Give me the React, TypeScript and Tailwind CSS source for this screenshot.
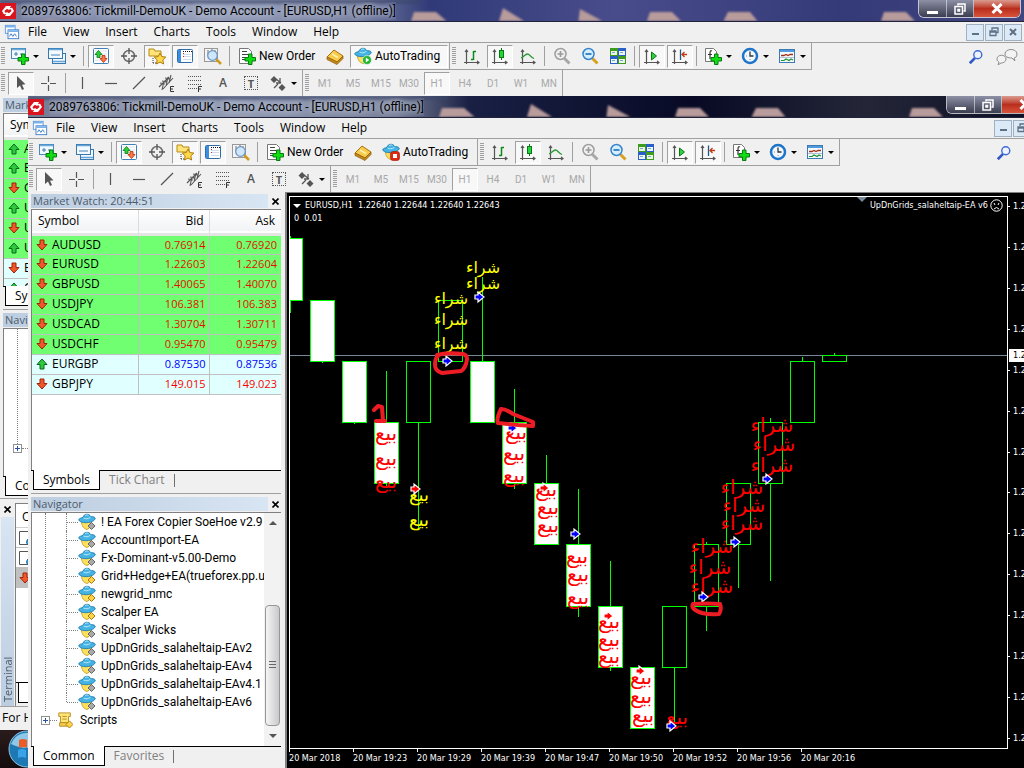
import type { ReactNode } from "react";
import { clsx } from "clsx";

type Direction = "up" | "down";

interface Quote {
  symbol: string;
  bid: string;
  ask: string;
  dir: Direction;
  flat?: boolean;
  blue?: boolean;
}

interface Candle {
  top: number;
  bottom: number;
  high?: number;
  low?: number;
  bear?: boolean;
}

const quotes: Quote[] = [
  { symbol: "AUDUSD", bid: "0.76914", ask: "0.76920", dir: "down" },
  { symbol: "EURUSD", bid: "1.22603", ask: "1.22604", dir: "down" },
  { symbol: "GBPUSD", bid: "1.40065", ask: "1.40070", dir: "down" },
  { symbol: "USDJPY", bid: "106.381", ask: "106.383", dir: "down" },
  { symbol: "USDCAD", bid: "1.30704", ask: "1.30711", dir: "down" },
  { symbol: "USDCHF", bid: "0.95470", ask: "0.95479", dir: "down" },
  { symbol: "EURGBP", bid: "0.87530", ask: "0.87536", dir: "up", flat: true, blue: true },
  { symbol: "GBPJPY", bid: "149.015", ask: "149.023", dir: "down", flat: true },
];

const backDirs: Direction[] = ["up", "up", "down", "up", "down", "up", "down", "up"];
const backQuotes: Quote[] = quotes.map((q, i) => ({ ...q, dir: backDirs[i] }));

const experts = [
  { name: "! EA Forex Copier SoeHoe v2.9" },
  { name: "AccountImport-EA" },
  { name: "Fx-Dominant-v5.00-Demo" },
  { name: "Grid+Hedge+EA(trueforex.pp.ua)", source: true },
  { name: "newgrid_nmc", source: true },
  { name: "Scalper EA", source: true },
  { name: "Scalper Wicks" },
  { name: "UpDnGrids_salaheltaip-EAv2" },
  { name: "UpDnGrids_salaheltaip-EAv4" },
  { name: "UpDnGrids_salaheltaip-EAv4.1" },
  { name: "UpDnGrids_salaheltaip-EAv6" },
];

const menus = ["File", "View", "Insert", "Charts", "Tools", "Window", "Help"];
const periods = ["M1", "M5", "M15", "M30", "H1", "H4", "D1", "W1", "MN"];
const times = ["2018", "19:23", "19:29", "19:39", "19:47", "19:50", "19:52", "19:56", "20:16"];

// one candle every 32px, y measured from the top of the plot
const candles: Candle[] = [
  { top: 41, bottom: 103, high: 39, low: 116, bear: true },
  { top: 103, bottom: 164, low: 166, bear: true },
  { top: 164, bottom: 225, low: 227, bear: true },
  { top: 225, bottom: 286, high: 174, low: 290, bear: true },
  { top: 164, bottom: 225, low: 332 },
  { top: 103, bottom: 164 },
  { top: 164, bottom: 225, high: 80, bear: true },
  { top: 225, bottom: 286, high: 192, low: 292, bear: true },
  { top: 286, bottom: 347, high: 258, bear: true },
  { top: 347, bottom: 409, high: 292, low: 420, bear: true },
  { top: 409, bottom: 470, high: 364, low: 474, bear: true },
  { top: 470, bottom: 531, bear: true },
  { top: 409, bottom: 470, low: 531 },
  { top: 347, bottom: 409, high: 345, low: 434 },
  { top: 286, bottom: 347, low: 391 },
  { top: 225, bottom: 286, high: 221, low: 384 },
  { top: 164, bottom: 225, high: 160 },
  { top: 158, bottom: 164, high: 156 },
];

const yellowBuys = [[161, 107], [161, 128], [161, 152], [193, 76], [193, 92]];
const yellowSells = [[129, 304], [129, 329]];
const redSells = [
  [96, 243], [96, 268], [96, 291],
  [226, 242], [224, 263], [224, 285],
  [256, 299], [258, 317], [258, 335],
  [287, 366], [288, 384], [288, 407],
  [319, 431], [319, 449], [319, 466],
  [351, 487], [351, 506], [353, 525],
  [387, 527],
];
const redBuys = [
  [422, 356], [420, 377], [422, 396],
  [452, 297], [454, 315], [452, 333],
  [482, 235], [484, 254], [482, 275],
];
const blueArrows = [[189, 100], [157, 164], [285, 337], [477, 282], [445, 345], [413, 400], [381, 529], [222, 231]];
const redArrows = [[125, 292], [254, 291], [318, 419], [350, 474]];

function Svg({ children, size = 18 }: { children: ReactNode; size?: number }) {
  return (
    <svg width={size} height={size} viewBox="0 0 18 18" fill="none" className="shrink-0" aria-hidden="true">
      {children}
    </svg>
  );
}

const Plus = () => (
  <path d="M10.500 7h3.500v3.500h3.500V14H14v3.500h-3.500V14H7v-3.500h3.500z" fill="#12dc12" stroke="#087a12" />
);

const NewChartIcon = () => (
  <Svg>
    <rect x="0.500" y="1.500" width="14" height="10" fill="#f2f9ff" stroke="#4a8abc" />
    <path d="M1 2.500h13" stroke="#6aaade" strokeWidth="1.500" />
    <path d="M3 7h4M5 5v4M9 7h3" stroke="#467aa8" />
    <Plus />
  </Svg>
);

const ProfilesIcon = () => (
  <Svg>
    <rect x="4.500" y="6.500" width="13" height="10" fill="#f2f9ff" stroke="#3878ac" />
    <rect x="0.500" y="1.500" width="14" height="10" fill="#f2f9ff" stroke="#3878ac" />
    <path d="M1 2.500h13M5 14.500h12" stroke="#64a6da" strokeWidth="1.500" />
    <path d="M3 8h9" stroke="#4982b4" />
  </Svg>
);

const MarketIcon = () => (
  <Svg>
    <rect x="1.500" y="1.500" width="15" height="15" rx="1" fill="#fff" stroke="#3f7fb5" />
    <path d="M3 4h12M3 7h12M3 10h12M3 13h12" stroke="#d9e3ee" />
    <path d="M6.500 3.500l3.500 4H8v3H5v-3H3z" fill="#2ed03a" stroke="#087a12" strokeWidth="0.800" />
    <path d="M11.500 15.500l-3.500-4h2v-3h3v3h2z" fill="#ff7848" stroke="#b82c08" strokeWidth="0.800" />
  </Svg>
);

const TargetIcon = () => (
  <Svg>
    <circle cx="9" cy="9" r="5.500" stroke="#6d6d6d" strokeWidth="1.500" />
    <path d="M9 1v6M9 11v6M1 9h6M11 9h6" stroke="#555" strokeWidth="1.300" />
  </Svg>
);

const FolderStarIcon = () => (
  <Svg>
    <path d="M1 9V2h5l1 2h6v5z" fill="#ffe47a" stroke="#b88a10" />
    <path d="M5 11v6M5 16h5" stroke="#333" strokeDasharray="1 1" />
    <path d="M12 6l1.800 3.600 4 .5-3 2.800.8 4.100-3.600-2-3.600 2 .8-4.100-3-2.800 4-.5z" fill="#ffd94a" stroke="#b07a08" />
  </Svg>
);

const NavigatorIcon = () => (
  <Svg>
    <rect x="1.500" y="2.500" width="15" height="13" rx="1" fill="#fff" stroke="#2f6ca5" />
    <path d="M3.500 3v12" stroke="#3b8ee0" strokeWidth="3" />
    <path d="M7 4.500h9" stroke="#111" strokeDasharray="1 1" />
    <path d="M7 7.500h8M7 9.500h8M7 12.500h8" stroke="#cfdcea" />
    <path d="M7 6.500h1M7 9.500h1" stroke="#d22" />
  </Svg>
);

const TesterIcon = () => (
  <Svg>
    <rect x="0.500" y="1.500" width="13" height="13" fill="#f4f4f4" stroke="#999" />
    <path d="M4 3v5M8 2v5M11 3v6" stroke="#777" />
    <path d="M12 12l5 5" stroke="#d19a1c" strokeWidth="2.500" />
    <circle cx="8.500" cy="8.500" r="4.800" fill="#cfe6fb" stroke="#6b97c4" strokeWidth="1.300" />
  </Svg>
);

const NewOrderIcon = () => (
  <Svg>
    <path d="M1.500 1.500h9l3 3v12h-12z" fill="#fff" stroke="#777" />
    <path d="M4 4.500h5M4 7.500h7M4 10.500h4M4 12.500h3" stroke="#444" />
    <Plus />
  </Svg>
);

const GoldIcon = () => (
  <Svg>
    <path d="M8 3l9 6-6 6-10-5z" fill="#f7cb4c" stroke="#a8700a" />
    <path d="M1 10l10 5 6-6v2.500L11 17.500 1 12.500z" fill="#c98a17" stroke="#8a5a08" strokeWidth="0.700" />
    <path d="M6 7l6 3.500" stroke="#fff0a8" strokeWidth="1.500" />
  </Svg>
);

const Expert = () => (
  <>
    <path d="M3.500 8c0 5 2 7.500 5.500 8.500 3-1 4.500-4 4.500-8.500z" fill="#ffe05c" stroke="#b9931c" strokeWidth="0.800" />
    <path d="M0.800 6.500c.5-1.500 3-1.500 4.200-2C5.500 0.500 11.500 0.300 12.500 3.500c1.500.2 4 .2 4.700 1.500.2 2.500-4 4.500-8.700 4.700-4 0-7.700-1-7.700-3.200z" fill="#45b4e4" stroke="#1c7cab" strokeWidth="0.900" />
    <path d="M5.500 5c2 1.300 5 1 7-.8M7 2.700c1-.8 2.500-.9 3.500-.4" stroke="#b5e8fb" />
  </>
);

const AutoTradingIcon = ({ running }: { running: boolean }) => (
  <Svg>
    <Expert />
    {running ? (
      <>
        <circle cx="13" cy="13" r="4.500" fill="#22b531" stroke="#fff" strokeWidth="0.600" />
        <path d="M11.800 10.500l3.500 2.500-3.500 2.500z" fill="#fff" />
      </>
    ) : (
      <>
        <rect x="8.500" y="8.500" width="9" height="9" rx="2.500" fill="#e02a10" stroke="#9e1604" strokeWidth="0.600" />
        <rect x="11" y="11" width="4" height="4" fill="#fff" />
      </>
    )}
  </Svg>
);

const ExpertIcon = ({ source }: { source?: boolean }) => (
  <Svg>
    <Expert />
    <path d="M13.500 9.500l3.500 3.500-3.500 3.500L10 13z" fill={source ? "#ffd24a" : "#a9a9a9"} stroke={source ? "#a87808" : "#666"} />
  </Svg>
);

const Axes = () => <path d="M3.500 3v14M1 15.500h15M2 5l1.500-2L5 5M14 14l2 1.500-2 1.500" stroke="#555" strokeWidth="1.200" />;

const BarChartIcon = () => (
  <Svg>
    <Axes />
    <path d="M10.500 4v9M8 12.500h2.500M10.500 4.500H13" stroke="#0b8a1c" strokeWidth="1.500" />
  </Svg>
);

const CandleIcon = () => (
  <Svg>
    <Axes />
    <path d="M10.500 1v12" stroke="#087a12" />
    <rect x="8.500" y="3.500" width="4" height="7" fill="#22d33a" stroke="#087a12" />
  </Svg>
);

const LineChartIcon = () => (
  <Svg>
    <Axes />
    <path d="M2 11c3-1 4-4 6.500-4 2 0 3 3 6.500 4.500" stroke="#2a9a34" strokeWidth="1.300" />
  </Svg>
);

const ZoomIcon = ({ plus }: { plus?: boolean }) => (
  <Svg>
    <path d="M11.500 11.500l5 5" stroke={plus ? "#a8a8a8" : "#d8a01e"} strokeWidth="3" />
    <circle cx="7.500" cy="7" r="5.500" fill={plus ? "#f0f0f0" : "#d4f0ff"} stroke={plus ? "#9d9d9d" : "#3783cc"} strokeWidth="1.500" />
    <path d={plus ? "M4.500 7h6M7.500 4v6" : "M4.500 7h6"} stroke={plus ? "#999" : "#1c6db5"} strokeWidth="1.600" />
  </Svg>
);

const TileIcon = () => (
  <Svg>
    <path d="M1 1h8v8H1zM9 9h8v8H9z" fill="#3e9c1c" />
    <path d="M9 1h8v8H9zM1 9h8v8H1z" fill="#2a5fc8" />
    <path d="M2 4h6v4H2zM10 4h6v4h-6zM2 12h6v4H2zM10 12h6v4h-6z" fill="#eef6ee" />
    <path d="M3 5.500h3M11 5.500h3M3 13.500h3M11 13.500h3" stroke="#7aa6c8" />
  </Svg>
);

const ScrollIcon = () => (
  <Svg>
    <Axes />
    <path d="M8.500 5v8l5-4z" fill="#30cf44" stroke="#087a12" />
  </Svg>
);

const ShiftIcon = () => (
  <Svg>
    <Axes />
    <path d="M9.500 2.500V13" stroke="#1c5a8a" strokeWidth="1.300" />
    <path d="M16 7.500h-5M13.500 5L11 7.500l2.500 2.500" stroke="#c43a10" strokeWidth="1.300" />
  </Svg>
);

const IndicatorsIcon = () => (
  <Svg>
    <path d="M1.500 1.500h8l3 3v10h-11z" fill="#fff" stroke="#777" />
    <path d="M8 4C6 3 6 5 6 7v5M4 7.500h4" stroke="#333" strokeWidth="1.200" />
    <Plus />
  </Svg>
);

const ClockIcon = () => (
  <Svg>
    <circle cx="9" cy="9" r="7" fill="#f2f8ff" stroke="#1d74c9" strokeWidth="2.500" />
    <path d="M9 4.500V9h3.500" stroke="#333" strokeWidth="1.300" />
    <path d="M5 9h1M9 13v-1" stroke="#888" />
  </Svg>
);

const TemplateIcon = () => (
  <Svg>
    <rect x="1.500" y="2.500" width="15" height="13" fill="#f5faff" stroke="#3c7ab2" />
    <path d="M2 4h14" stroke="#4f9ae0" strokeWidth="2" />
    <path d="M3 8.500h3l2-1 2 1 2-1h3" stroke="#a03018" strokeWidth="1.300" />
    <path d="M2 10.500h14" stroke="#9ab" strokeWidth="0.700" />
    <path d="M3 13.500h3l2-1.500 3 1.500 2-1.500 2 1" stroke="#1c9430" strokeWidth="1.200" />
  </Svg>
);

const CursorIcon = () => (
  <Svg>
    <path d="M5 2v12l3-2.500 2 4.500 2-1-2-4.300 3.500-.4z" fill="#555" />
  </Svg>
);

const CrosshairIcon = () => (
  <Svg>
    <path d="M8.500 2v6M8.500 11v6M1 9.500h6M10 9.500h6" stroke="#555" strokeWidth="1.200" />
  </Svg>
);

const LineIcon = ({ d }: { d: string }) => (
  <Svg>
    <path d={d} stroke="#555" strokeWidth="1.200" />
  </Svg>
);

const ChannelIcon = () => (
  <Svg>
    <path d="M1 13L11 3M5 15L15 4M2 9l5 1M4 7l5 1M7 4l5 1M4 16l2-9M8 12l2-9M11 9l2-8" stroke="#555" strokeWidth="1.100" />
    <path d="M16 12.500h-3.500v5H16M12.500 15H15" stroke="#333" />
  </Svg>
);

const FiboIcon = () => (
  <Svg>
    <path d="M2 2.500h14M2 6.500h14M2 10.500h14M2 14.500h9" stroke="#555" strokeDasharray="1 1" />
    <path d="M16 12.500h-3.500V18M12.500 15H15" stroke="#333" />
  </Svg>
);

const ShapesIcon = () => (
  <Svg>
    <path d="M5 2l3.500 3.500L5 9 1.500 5.500zM13 10l3.500 3.500L13 17l-3.500-3.500z" fill="#555" />
    <path d="M5 14l4-4M7 5l5 4M11 4v5h-4" stroke="#555" strokeWidth="1.300" />
  </Svg>
);

const LogoIcon = () => (
  <svg width="16" height="16" viewBox="0 0 16 16" className="shrink-0" aria-hidden="true">
    <rect width="16" height="16" fill="#d9141e" />
    <path d="M2 8l4-5h5l-1 1.800 2.500 1.200-4 .7-1.500-1L4.500 8l1 2.500-1.500 1z" fill="#fff" />
    <path d="M14 8l-4 5H5l1-1.800L3.500 10l4-.7 1.500 1L11.500 8l-1-2.500 1.500-1z" fill="#fff" />
  </svg>
);

const ChartMenuIcon = () => (
  <Svg size={16}>
    <rect x="1.500" y="1.500" width="11" height="9" fill="#fff" stroke="#5a96d8" />
    <rect x="4.500" y="6.500" width="12" height="10" fill="#fff" stroke="#3a7ccc" />
    <path d="M2 3h10M5 8h11" stroke="#79b1ea" strokeWidth="2" />
    <path d="M6 14l2-3 2 3 2-3 2 3" stroke="#2f72c2" />
  </Svg>
);

const SearchIcon = () => (
  <Svg size={16}>
    <path d="M8 10l-6 6" stroke="#3158c4" strokeWidth="3" />
    <circle cx="11" cy="6.500" r="4.500" fill="#eef4ff" stroke="#3f6ad4" strokeWidth="1.600" />
  </Svg>
);

const ChatIcon = () => (
  <svg width="22" height="16" viewBox="0 0 22 16" fill="#f3f3f3" stroke="#8d8d8d" aria-hidden="true">
    <path d="M9 5c0-6 12-6 12 0 0 3-2 4-3 4l1 3-3-3c-4 0-7-1-7-4z" />
    <path d="M1 10c0-5 9-5 9 0 0 3-3 4-5 4l-3 2 1-3c-1-1-2-1-2-3z" />
  </svg>
);

const DirectionIcon = ({ dir }: { dir: Direction }) => (
  <svg width="12" height="12" viewBox="0 0 12 12" className="shrink-0" aria-label={dir}>
    {dir === "up" ? (
      <path d="M6 1l5 5.500H8V11H4V6.500H1z" fill="#30c840" stroke="#08691a" />
    ) : (
      <path d="M6 11l5-5.500H8V1H4v4.500H1z" fill="#f0582c" stroke="#9e2208" />
    )}
  </svg>
);

const Caret = () => <span className="border-x-3 border-t-3 border-x-transparent border-t-black" />;

function Tool({ label, pressed, drop, children }: { label: string; pressed?: boolean; drop?: boolean; children: ReactNode }) {
  return (
    <button
      type="button"
      aria-label={label}
      className={clsx(
        "flex h-[23px] shrink-0 items-center border",
        drop ? "w-[35px] gap-1 pl-0.5" : "w-[26px] justify-center",
        pressed ? "border-t-[#a0a0a0] border-r-white border-b-white border-l-[#a0a0a0] bg-[#f8f8f8]" : "border-transparent"
      )}
    >
      {children}
      {drop && <Caret />}
    </button>
  );
}

const Grip = () => <span className="mr-px h-[18px] w-1 shrink-0 bg-[repeating-linear-gradient(#a0a0a0_0_1px,#f0f0f0_1px_2px)]" />;
const Separator = () => <span className="mx-px h-5 w-0.5 shrink-0 border-l border-[#a0a0a0]" />;

function TitleBar({ dark }: { dark?: boolean }) {
  const button = "flex items-center justify-center border-r border-white/50 text-white";
  return (
    <header
      className={clsx(
        "relative flex h-[22px] shrink-0 items-center overflow-hidden border-b border-[#20233a]",
        dark
          ? "bg-[linear-gradient(90deg,#747b94_0,#8f99b2_20%,#777f98_36%,#192044_43%,#080a25_65%,#242638_82%,#090b22)]"
          : "bg-[linear-gradient(90deg,#747b9c_0,#949db8_20%,#7880a0_35%,#303a78_42%,#494c8a_60%,#343a78_82%,#41467e)]"
      )}
    >
      <svg className="absolute inset-0 h-full w-full blur-[1px]" aria-hidden="true">
        <g fill="#b89b9b">
          <path d="M410 24l4-12h22l14 12zM498 24l5-16 26 16zM578 24l2-15 28 15zM646 24l4-12h22l12 12zM722 24l6-12h22l10 12zM880 24l4-12h22l12 12z" />
          <path d="M20 24l30-6 30 6zM196 24l20-5 20 5z" opacity="0.500" />
        </g>
        <path d="M0 0h420v4H0z" fill="#3b4468" opacity="0.600" />
      </svg>
      <div className="relative flex h-full min-w-0 flex-1 items-center gap-[5px]">
        <LogoIcon />
        <h1 className="truncate font-[Roboto] text-[12px] text-black [text-shadow:0_0_6px_#c8d0e0,0_0_8px_#c8d0e0]">
          2089763806: Tickmill-DemoUK - Demo Account - [EURUSD,H1 (offline)]
        </h1>
      </div>
      <div className="relative mr-[3px] flex h-[18px] self-start overflow-hidden rounded-b-md border border-t-0 border-white/70">
        <button type="button" aria-label="Minimize" className={clsx(button, "w-7 bg-linear-to-b from-[#8e91a5] to-[#3b3d50]")}>
          <span className="mt-2 h-[3px] w-[11px] bg-white" />
        </button>
        <button type="button" aria-label="Restore" className={clsx(button, "w-[27px] bg-linear-to-b from-[#8e91a5] to-[#3b3d50]")}>
          <svg width="12" height="12" viewBox="0 0 12 12" fill="none" stroke="#fff" strokeWidth="1.500">
            <path d="M4 2.500V1h7v7H9.500" />
            <path d="M1 3.500h7.500V11H1zM4 6.500h1.500v1.500H4z" />
          </svg>
        </button>
        <button type="button" aria-label="Close" className="flex w-[46px] items-center justify-center bg-linear-to-b from-[#d99a90] via-[#b92d1c] to-[#d8543a]">
          <svg width="12" height="11" viewBox="0 0 12 11" stroke="#fff" strokeWidth="3">
            <path d="M1.500 1l9 9M10.500 1l-9 9" />
          </svg>
        </button>
      </div>
    </header>
  );
}

function MenuBar() {
  const mdi = "flex h-[17px] w-[18px] items-center justify-center border border-[#9fb0c2] bg-[#dce9f7]";
  return (
    <nav className="flex h-[21px] shrink-0 items-center border-b border-[#a0a0a0] bg-[#f0f0f0] pr-0.5 pl-1">
      <ChartMenuIcon />
      <div className="ml-2 flex flex-1 gap-4 text-[12px]">
        {menus.map((m) => (
          <button key={m} type="button">{m}</button>
        ))}
      </div>
      <div className="flex gap-px">
        <button type="button" aria-label="Minimize chart" className={mdi}>
          <span className="mt-1 h-0.5 w-[7px] bg-[#5d7285]" />
        </button>
        <button type="button" aria-label="Restore chart" className={mdi}>
          <svg width="10" height="10" viewBox="0 0 10 10" fill="none" stroke="#5d7285" strokeWidth="1.300">
            <path d="M3 3V1h6v4.500H7M1 4h6v4.500H1zM1 5h6" />
          </svg>
        </button>
        <button type="button" aria-label="Close chart" className={mdi}>
          <svg width="8" height="8" viewBox="0 0 8 8" stroke="#5d7285" strokeWidth="2">
            <path d="M1 1l6 6M7 1L1 7" />
          </svg>
        </button>
      </div>
    </nav>
  );
}

function MainToolbar({ running }: { running: boolean }) {
  return (
    <div className="flex h-[27px] shrink-0 items-center justify-between pr-1.5">
      <div className="flex h-full shrink-0">
        <div className="flex h-full items-center gap-0.5 border-r border-b border-[#a0a0a0] pr-px pl-px">
          <Grip />
          <Tool label="New chart" drop><NewChartIcon /></Tool>
          <Tool label="Profiles" drop><ProfilesIcon /></Tool>
          <Separator />
          <Tool label="Market Watch" pressed><MarketIcon /></Tool>
          <Tool label="Data Window"><TargetIcon /></Tool>
          <Tool label="Navigator" pressed><FolderStarIcon /></Tool>
          <Tool label="Terminal" pressed><NavigatorIcon /></Tool>
          <Tool label="Strategy Tester"><TesterIcon /></Tool>
          <Separator />
          <button type="button" className="flex h-[23px] w-[86px] items-center gap-[3px] pl-1 font-[Roboto] text-[12px] whitespace-nowrap">
            <NewOrderIcon />
            New Order
          </button>
          <Tool label="MetaEditor"><GoldIcon /></Tool>
          <button
            type="button"
            aria-pressed={running}
            className={clsx(
              "flex h-[23px] w-[98px] items-center gap-[3px] border pl-[3px] font-[Roboto] text-[12px]",
              running ? "border-t-[#a0a0a0] border-r-white border-b-white border-l-[#a0a0a0] bg-[#f8f8f8]" : "border-transparent"
            )}
          >
            <AutoTradingIcon running={running} />
            AutoTrading
          </button>
        </div>
        <div className="flex h-full items-center gap-0.5 border-r border-b border-[#a0a0a0] pr-px pl-0.5">
          <Grip />
          <Tool label="Bar chart"><BarChartIcon /></Tool>
          <Tool label="Candlesticks" pressed><CandleIcon /></Tool>
          <Tool label="Line chart"><LineChartIcon /></Tool>
          <Separator />
          <Tool label="Zoom in"><ZoomIcon plus /></Tool>
          <Tool label="Zoom out"><ZoomIcon /></Tool>
          <Tool label="Tile windows"><TileIcon /></Tool>
          <Separator />
          <Tool label="Auto scroll" pressed><ScrollIcon /></Tool>
          <Tool label="Chart shift" pressed><ShiftIcon /></Tool>
          <Separator />
          <Tool label="Indicators" drop><IndicatorsIcon /></Tool>
          <Tool label="Periods" drop><ClockIcon /></Tool>
          <Tool label="Templates" drop><TemplateIcon /></Tool>
        </div>
      </div>
      <div className="flex shrink-0 items-center gap-3">
        <button type="button" aria-label="Search"><SearchIcon /></button>
        <button type="button" aria-label="Chat"><ChatIcon /></button>
      </div>
    </div>
  );
}

function DrawToolbar() {
  return (
    <div className="flex h-[26px] shrink-0">
      <div className="flex items-center gap-0.5 border-r border-[#a0a0a0] pr-px pl-px">
        <Grip />
        <Tool label="Cursor" pressed><CursorIcon /></Tool>
        <Tool label="Crosshair"><CrosshairIcon /></Tool>
        <Separator />
        <Tool label="Vertical line"><LineIcon d="M8.500 3v12" /></Tool>
        <Tool label="Horizontal line"><LineIcon d="M3 9.500h12" /></Tool>
        <Tool label="Trendline"><LineIcon d="M3 15L15 3" /></Tool>
        <Tool label="Channel"><ChannelIcon /></Tool>
        <Tool label="Fibonacci"><FiboIcon /></Tool>
        <Tool label="Text"><span className="text-[12px] font-semibold text-[#555]">A</span></Tool>
        <Tool label="Text label">
          <span className="flex size-[14px] items-center justify-center border border-dotted border-[#555] text-[11px] leading-none font-bold text-[#555]">T</span>
        </Tool>
        <Tool label="Arrows" drop><ShapesIcon /></Tool>
      </div>
      <div className="flex items-center gap-0.5 border-r border-[#a0a0a0] pl-0.5">
        <Grip />
        {periods.map((p) => (
          <Tool key={p} label={p} pressed={p === "H1"}>
            <span className="font-[Roboto] text-[10px] text-[#a8a8a8]">{p}</span>
          </Tool>
        ))}
      </div>
    </div>
  );
}

function PanelHeader({ children }: { children: ReactNode }) {
  return (
    <div className="flex h-[17px] shrink-0 items-center pt-px">
      <h2 className="h-[14px] flex-1 truncate bg-linear-to-r from-[#bccde0] to-[#d8e5f3] pl-0.5 text-[11px] leading-[13px] text-[#4c5a6b]">{children}</h2>
      <button type="button" aria-label="Close panel" className="flex w-[13px] justify-end pr-0.5">
        <svg width="7" height="7" viewBox="0 0 7 7" stroke="#000" strokeWidth="1.600"><path d="M.5.5l6 6M6.500.5l-6 6" /></svg>
      </button>
    </div>
  );
}

function Tabs({ active, other }: { active: string; other: string }) {
  return (
    <div className="flex h-[22px] shrink-0 items-start border-t border-black bg-[#f0f0f0] pl-0.5 text-[12px] leading-[18px]">
      <button type="button" className="-mt-px h-5 border-x border-b border-black bg-white px-[9px]">{active}</button>
      <button type="button" className="px-[9px] text-[#808080]">{other}</button>
      <span className="mt-[3px] h-[13px] w-px bg-[#707070]" />
    </div>
  );
}

function MarketWatch({ rows }: { rows: Quote[] }) {
  return (
    <>
      <PanelHeader>Market Watch: 20:44:51</PanelHeader>
      <div className="min-h-0 flex-1 overflow-hidden border-t border-l border-[#808080] bg-white">
        <table className="w-full table-fixed border-collapse text-[12px]">
          <thead>
            <tr className="h-6 border-b-3 border-[#e4e4e4] bg-linear-to-b from-white to-[#f2f3f5]">
              <th className="w-[106px] border-r border-[#dcdcdc] pl-1.5 text-left font-normal">Symbol</th>
              <th className="w-[71px] border-r border-[#dcdcdc] pr-[5px] text-right font-normal">Bid</th>
              <th className="pr-1.5 text-right font-normal">Ask</th>
            </tr>
          </thead>
          <tbody>
            {rows.map((q) => (
              <tr key={q.symbol} className={clsx("h-5 border-b border-[#c0c0c0] leading-[18px]", q.flat ? "bg-[#e0ffff]" : "bg-[#70ff70]")}>
                <td className="border-r border-[#c0c0c0] pl-1">
                  <span className="flex items-center gap-1"><DirectionIcon dir={q.dir} />{q.symbol}</span>
                </td>
                <td className={clsx("border-r border-[#c0c0c0] pr-[3px] text-right text-[11px]", q.blue ? "text-[#0000ff]" : q.flat ? "text-[#ff0000]" : "text-[#e01000]")}>{q.bid}</td>
                <td className={clsx("pr-1 text-right text-[11px]", q.blue ? "text-[#0000ff]" : q.flat ? "text-[#ff0000]" : "text-[#e01000]")}>{q.ask}</td>
              </tr>
            ))}
          </tbody>
        </table>
      </div>
      <Tabs active="Symbols" other="Tick Chart" />
    </>
  );
}

const Expander = () => (
  <button type="button" aria-label="Expand" className="flex size-[9px] shrink-0 items-center justify-center border border-[#919191] bg-white">
    <svg width="5" height="5" viewBox="0 0 5 5" stroke="#2b4fa0"><path d="M0 2.500h5M2.500 0v5" /></svg>
  </button>
);

function NavigatorTree() {
  return (
    <div className="flex min-h-0 flex-1 border-t border-l border-[#808080] bg-white">
      <div className="min-w-0 flex-1 overflow-hidden font-[Roboto] text-[12px] leading-[18px]">
        <ul className="ml-[13px] border-l border-dotted border-[#808080]">
          {experts.map((e, i) => (
            <li key={e.name} className="flex h-[18px] items-center pl-5">
              <span className={clsx("w-px self-start border-l border-dotted border-[#808080]", i === experts.length - 1 ? "h-[9px]" : "h-full")} />
              <span className="w-[11px] shrink-0 border-t border-dotted border-[#808080]" />
              <ExpertIcon source={e.source} />
              <span className="ml-[5px] whitespace-nowrap">{e.name}</span>
            </li>
          ))}
        </ul>
        <div className="ml-[9px] flex h-[18px] items-center">
          <Expander />
          <span className="w-[7px] border-t border-dotted border-[#808080]" />
          <Svg size={16}>
            <path d="M2 1h13v4h-2v7H4V5H2z" fill="#ffe578" stroke="#b18a1a" />
            <path d="M3 12h9v4H3z" fill="#f3cc50" stroke="#b18a1a" />
            <path d="M6 5h5M6 8h5" stroke="#b18a1a" />
            <path d="M14 10l4 4-4 4-4-4z" fill="#ffd24a" stroke="#a87808" />
          </Svg>
          <span className="ml-[7px]">Scripts</span>
        </div>
      </div>
      <div className="flex w-[17px] flex-col items-center bg-[#f2f2f2] py-2">
        <span className="mb-1 border-x-4 border-b-4 border-x-transparent border-b-[#555]" />
        <span className="flex-[77]" />
        <span className="flex w-[15px] flex-[121] items-center justify-center rounded-sm border border-[#979797] bg-linear-to-r from-[#f5f5f5] to-[#c9c9cd]">
          <span className="h-[8px] w-[7px] bg-[repeating-linear-gradient(#666_0_1px,transparent_1px_3px)]" />
        </span>
        <span className="mt-2 border-x-4 border-t-4 border-x-transparent border-t-[#555]" />
      </div>
    </div>
  );
}

function SideColumn({ back }: { back?: boolean }) {
  return (
    <aside className="flex w-[250px] shrink-0 flex-col">
      <section className={clsx("flex flex-col", back ? "h-[212px]" : "h-[300px]")}>
        <MarketWatch rows={back ? backQuotes : quotes} />
      </section>
      <div className="mt-px h-0.5 border-t border-[#a0a0a0]" />
      <section className="flex min-h-0 flex-1 flex-col">
        <PanelHeader>Navigator</PanelHeader>
        {back ? (
          <div className="min-h-0 flex-1 border-t border-l border-[#808080] bg-white">
            <div className="ml-[13px] h-[115px] border-l border-dotted border-[#808080]" />
            <div className="ml-[9px] flex items-center">
              <Expander />
              <span className="w-3 border-t border-dotted border-[#808080]" />
            </div>
          </div>
        ) : (
          <NavigatorTree />
        )}
        <Tabs active="Common" other="Favorites" />
      </section>
    </aside>
  );
}

function Marker({ x, y, color }: { x: number; y: number; color: string }) {
  return (
    <path
      d="M-4 -2h3v-3l6 5-6 5v-3h-3z"
      transform={`translate(${x} ${y})`}
      fill={color}
      stroke="#fff"
      strokeWidth="1.200"
    />
  );
}

function Labels({ at, text, className }: { at: number[][]; text: string; className: string }) {
  return at.map(([x, y]) => (
    <text key={`${x}-${y}`} x={x} y={y} textAnchor="middle" className={className}>{text}</text>
  ));
}

function Plot() {
  return (
    <svg className="absolute inset-0 h-full w-full" aria-label="EURUSD H1 candles">
      <line x1="0" x2="100%" y1="158.500" y2="158.500" stroke="#778899" />
      <g stroke="#00ff00">
        {candles.map((c, i) => (
          <g key={i}>
            <line x1={i * 32 + 0.5} x2={i * 32 + 0.5} y1={c.high ?? c.top} y2={c.top} />
            <line x1={i * 32 + 0.5} x2={i * 32 + 0.5} y1={c.bottom} y2={c.low ?? c.bottom} />
            <rect x={i * 32 - 11.5} y={c.top + 0.5} width="24" height={c.bottom - c.top} fill={c.bear ? "#fff" : "none"} />
          </g>
        ))}
      </g>
      <g fontFamily="'DejaVu Sans', sans-serif">
        <Labels at={yellowBuys} text="شراء" className="fill-[#ffff00] text-[16px]" />
        <Labels at={yellowSells} text="بيع" className="fill-[#ffff00] text-[18px]" />
        <Labels at={redSells} text="بيع" className="fill-[#ff0000] text-[20px]" />
        <Labels at={redBuys} text="شراء" className="fill-[#ff0000] text-[20px]" />
      </g>
      {blueArrows.map(([x, y]) => <Marker key={`${x}-${y}`} x={x} y={y} color="#0000ff" />)}
      {redArrows.map(([x, y]) => <Marker key={`${x}-${y}`} x={x} y={y} color="#ff0000" />)}
      <g fill="none" stroke="#ed1c24" strokeWidth="4" strokeLinecap="round" strokeLinejoin="round">
        <path d="M84 213l4-4 4 1 1 14M86 224h9" />
        <path d="M147 158q10-3 26-1 4 1 4 5-1 9-6 12l-19 2q-7-2-7-8 0-7 3-9" />
        <path d="M211 212q5 0 12 5l20 8v4l-15-1-20-2q-2-4 3-14" />
        <path d="M403 407q14-1 27 0 2 5-1 10-9 1-17-1-12-4-9-9" />
      </g>
    </svg>
  );
}

function Chart() {
  return (
    <main className="flex min-w-0 flex-1 flex-col border-t border-l-2 border-[#808080] bg-black pt-[3px] pl-0.5 font-['DejaVu_Sans_Condensed',sans-serif] text-[9px] leading-[13px] text-white">
      <div className="flex min-h-0 flex-1">
        <section className="relative min-w-0 flex-1 overflow-hidden border border-white">
          <Plot />
          <div className="relative flex justify-between pt-0.5 pr-1 pl-[3px]">
            <div>
              <div className="flex items-center gap-1 whitespace-pre">
                <span className="border-x-4 border-t-4 border-x-transparent border-t-white" />
                EURUSD,H1  1.22640 1.22644 1.22640 1.22643
              </div>
              <div className="whitespace-pre pl-px">0  0.01</div>
            </div>
            <div className="flex items-start gap-0.5">
              <span className="-mt-0.5 mr-px border-x-5 border-t-5 border-x-transparent border-t-[#778899]" />
              <span>UpDnGrids_salaheltaip-EA v6</span>
              <svg width="13" height="13" viewBox="0 0 13 13" fill="none" stroke="#fff" aria-label="Trading disabled">
                <circle cx="6.500" cy="6.500" r="5.700" />
                <path d="M4 10q2.500-3 5 0M4 4l1 2M9 4L8 6" />
              </svg>
            </div>
          </div>
        </section>
        <div className="relative w-[44px] shrink-0">
          <ul className="flex h-full flex-col justify-between pt-1 pb-1">
            {Array.from({ length: 14 }, (_, i) => (
              <li key={i} className="flex items-center gap-[3px]">
                <span className="h-px w-0.5 bg-white" />
                1.22{690 - i * 10}
              </li>
            ))}
          </ul>
          <span className="absolute top-[153px] left-px w-full bg-white pl-1 text-black">1.22643</span>
        </div>
      </div>
      <div className="flex h-[19px]">
        {times.map((t) => (
          <div key={t} className="w-16 shrink-0 whitespace-nowrap">
            <span className="block h-[3px] w-px bg-white" />
            20 Mar {t}
          </div>
        ))}
      </div>
    </main>
  );
}

function TerminalPanel() {
  return (
    <section className="flex h-[208px] shrink-0 border-t border-[#a0a0a0] pt-1 text-[12px]">
      <div className="flex w-[15px] flex-col items-center">
        <button type="button" aria-label="Close terminal" className="flex h-3 items-center">
          <svg width="7" height="7" viewBox="0 0 7 7" stroke="#000" strokeWidth="1.600"><path d="M.5.5l6 6M6.500.5l-6 6" /></svg>
        </button>
        <h2 className="mt-0.5 flex-1 rotate-180 bg-linear-to-t from-[#d8e5f3] to-[#bccde0] pt-1 text-[11px] leading-[13px] text-[#4c5a6b] [writing-mode:vertical-rl]">Terminal</h2>
      </div>
      <div className="flex flex-1 flex-col border-t border-l border-[#808080] bg-white">
        <div className="h-6 border-b border-[#d0d0d0] pt-1 pl-1.5">Order</div>
        {[0, 1].map((i) => (
          <div key={i} className="flex h-5 items-center border-b border-[#c0c0c0] pl-[3px]">
            <svg width="14" height="14" viewBox="0 0 14 14" fill="#fff" stroke="#555" aria-hidden="true">
              <path d="M.5.5h12v13H.5z" />
              <path d="M9 8a4 4 0 0 0 0 6h5V8z" fill="#3a9ad0" stroke="#1c6c9c" />
            </svg>
          </div>
        ))}
        <div className="flex h-5 items-center bg-[#c0c0c0] pl-[3px]"><DirectionIcon dir="down" /></div>
        <div className="flex-1" />
        <div className="h-6 border-t border-black bg-[#f0f0f0] pl-0.5"><div className="h-5 w-14 border-b border-l border-black bg-white" /></div>
      </div>
    </section>
  );
}

function Terminal({ back }: { back?: boolean }) {
  return (
    <div className="flex h-full flex-col bg-[#f0f0f0] text-black">
      <TitleBar dark={!back} />
      <MenuBar />
      <MainToolbar running={!!back} />
      <DrawToolbar />
      <div className="flex min-h-0 flex-1 pl-[3px]">
        <SideColumn back={back} />
        {back ? <div className="flex-1 bg-black" /> : (
          <>
            <div className="w-1 shrink-0" />
            <Chart />
          </>
        )}
      </div>
      {back && (
        <>
          <TerminalPanel />
          <footer className="h-6 shrink-0 border-t border-[#a0a0a0] pt-0.5 pl-0.5 text-[12px]">For Help, press F1</footer>
        </>
      )}
    </div>
  );
}

function Taskbar() {
  return (
    <div className="h-[38px] shrink-0 bg-linear-to-b from-[#2a1c1c] to-[#140c0e] pl-2">
      <button type="button" aria-label="Start" className="block">
        <svg width="38" height="38" viewBox="0 0 38 38" aria-hidden="true">
          <circle cx="19" cy="19" r="18" fill="#1e78b4" stroke="#8cc4e4" />
          <path d="M3 14a17 17 0 0 1 32 0q-16 8-32 0" fill="#8fc8e6" />
          <path d="M11 10q4-2 8 0v8q-4-2-8 0z" fill="#ee5a24" />
          <path d="M20 10q4 2 8 0v8q-4 2-8 0z" fill="#86c232" />
          <path d="M10 20q4-2 8 0v8q-4-2-8 0z" fill="#39a3e8" />
          <path d="M20 20q4 2 8 0v8q-4 2-8 0z" fill="#fbc92e" />
        </svg>
      </button>
    </div>
  );
}

export default function App() {
  return (
    <div className="relative flex h-screen flex-col overflow-hidden font-['Open_Sans','DejaVu_Sans',sans-serif]">
      <div className="min-h-0 flex-1">
        <Terminal back />
      </div>
      <Taskbar />
      {/* front window, dragged partly off the right edge */}
      <div className="absolute top-24 -right-7 bottom-0 left-7">
        <Terminal />
      </div>
    </div>
  );
}
